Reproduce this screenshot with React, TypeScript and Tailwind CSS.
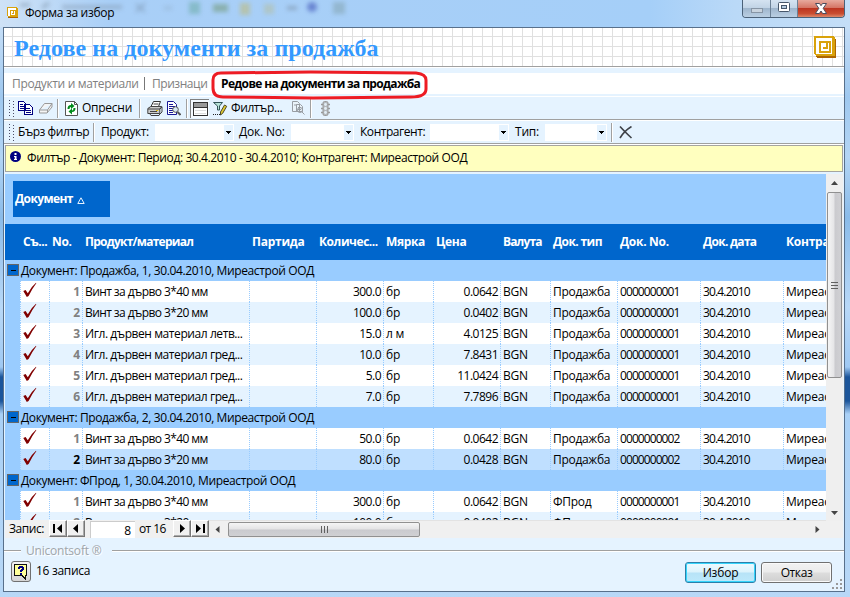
import React from "react";
import { clsx } from "clsx";

const COLS =
  "grid-cols-[29px_33px_167px_67px_67px_50px_67px_50px_67px_83px_83px_43px]";
const UI = "font-['Open_Sans','Noto_Sans',sans-serif]";

type Item = {
  no: number;
  name: string;
  qty: string;
  unit: string;
  price: string;
  kind: string;
  doc: string;
  selected?: boolean;
};

type Group = { title: string; items: Item[] };

const groups: Group[] = [
  {
    title: "Документ: Продажба, 1, 30.04.2010, Миреастрой ООД",
    items: [
      { no: 1, name: "Винт за дърво 3*40 мм", qty: "300.0", unit: "бр", price: "0.0642", kind: "Продажба", doc: "0000000001" },
      { no: 2, name: "Винт за дърво 3*20 мм", qty: "100.0", unit: "бр", price: "0.0402", kind: "Продажба", doc: "0000000001" },
      { no: 3, name: "Игл. дървен материал летв...", qty: "15.0", unit: "л м", price: "4.0125", kind: "Продажба", doc: "0000000001" },
      { no: 4, name: "Игл. дървен материал гред...", qty: "10.0", unit: "бр", price: "7.8431", kind: "Продажба", doc: "0000000001" },
      { no: 5, name: "Игл. дървен материал гред...", qty: "5.0", unit: "бр", price: "11.0424", kind: "Продажба", doc: "0000000001" },
      { no: 6, name: "Игл. дървен материал гред...", qty: "7.0", unit: "бр", price: "7.7896", kind: "Продажба", doc: "0000000001" },
    ],
  },
  {
    title: "Документ: Продажба, 2, 30.04.2010, Миреастрой ООД",
    items: [
      { no: 1, name: "Винт за дърво 3*40 мм", qty: "50.0", unit: "бр", price: "0.0642", kind: "Продажба", doc: "0000000002" },
      { no: 2, name: "Винт за дърво 3*20 мм", qty: "80.0", unit: "бр", price: "0.0428", kind: "Продажба", doc: "0000000002", selected: true },
    ],
  },
  {
    title: "Документ: ФПрод, 1, 30.04.2010, Миреастрой ООД",
    items: [
      { no: 1, name: "Винт за дърво 3*40 мм", qty: "300.0", unit: "бр", price: "0.0642", kind: "ФПрод", doc: "0000000001" },
      { no: 2, name: "Винт за дърво 3*20 мм", qty: "100.0", unit: "бр", price: "0.0402", kind: "ФПрод", doc: "0000000001" },
    ],
  },
];

const headers: [string, string][] = [
  ["Съ...", "tracking-[-0.45px]"],
  ["No.", "tracking-[-0.3px]"],
  ["Продукт/материал", "tracking-[-0.75px]"],
  ["Партида", "tracking-[-0.25px]"],
  ["Количес...", "tracking-[-0.45px]"],
  ["Мярка", "tracking-[-0.35px]"],
  ["Цена", "tracking-[-0.3px]"],
  ["Валута", "tracking-[-0.85px]"],
  ["Док. тип", "tracking-[-0.6px]"],
  ["Док. No.", "tracking-[-0.3px]"],
  ["Док. дата", "tracking-[-0.7px]"],
  ["Контра", "tracking-[-0.25px]"],
];

function BrandIcon({ size }: { size: number }) {
  return (
    <svg width={size} height={size} viewBox="0 0 22 22" shapeRendering="crispEdges">
      <path d="M3 2h17l2 1v19H3l-1-1z" fill="#ad6500" />
      <path d="M0 0h19l2 2v18H2l-2-2z" fill="#d9a20b" />
      <path d="M2 2h16v16H2z" fill="#fff" />
      <path d="M5 5h12v12H5z" fill="#d9a20b" />
      <path d="M7 7h8v8H7z" fill="#fff" />
      <path d="M7 11h5V7h2v6H9v2H7z" fill="#d9a20b" />
      <path d="M7 7h5v4H9v4H7z" fill="#fff" />
    </svg>
  );
}

function Check() {
  return (
    <svg className="mt-[1px]" width="14" height="16" viewBox="0 0 14 16">
      <path d="M0.3 9L2.600 8l2.200 3.300Q8 5 13 .8L13.300 1.300Q9 7 5.600 14L3.800 15z" fill="#800000" />
    </svg>
  );
}

function Sep({ className }: { className: string }) {
  return <div className={clsx("w-[2px] shrink-0 border-l border-[#a0a0a0] border-r border-r-white", className)} />;
}

function Grip() {
  return (
    <svg className="ml-[5px] mr-[2px] shrink-0" width="6" height="17" shapeRendering="crispEdges">
      {[0, 3, 6, 9, 12, 15].map((y) => (
        <g key={y} fill="#4b4b65">
          <rect x="0" y={y} width="1" height="1" />
          <rect x="4" y={y + 1} width="1" height="1" />
        </g>
      ))}
    </svg>
  );
}

function Combo({ className }: { className: string }) {
  return (
    <div className={clsx("flex h-[17px] shrink-0 border border-white bg-white", className)}>
      <div className="flex-1" />
      <div className="flex w-[9px] items-center justify-center bg-[#e5f3ff]">
        <svg width="5" height="3" shapeRendering="crispEdges"><path d="M0 0h5v1H4v1H3v1H2V2H1V1H0z" fill="#000" /></svg>
      </div>
    </div>
  );
}

function Row({ item, index }: { item: Item; index: number }) {
  const cell =
    "h-[21px] overflow-hidden whitespace-nowrap pl-[3px] bg-[linear-gradient(#99ccff_50%,transparent_50%)] bg-[length:1px_2px] bg-repeat-y";
  const bg = item.selected ? "bg-[#bfdfff]" : index % 2 ? "bg-[#e5f3ff]" : "bg-white";
  const num = "tracking-[-0.5px]";
  return (
    <div className={clsx("ml-[15px] grid h-[21px] shrink-0 leading-[21px]", COLS, bg)}>
      <div className={clsx(cell, "flex")}><Check /></div>
      <div className={clsx(cell, "pr-[2px] text-right font-bold", item.selected ? "text-black" : "text-[#808080]")}>{item.no}</div>
      <div className={clsx(cell, item.name.startsWith("Винт") ? "tracking-[-0.58px]" : "tracking-[-0.42px]")}>{item.name}</div>
      <div className={cell} />
      <div className={clsx(cell, "pr-[2px] text-right", num)}>{item.qty}</div>
      <div className={clsx(cell, "tracking-[-0.2px]")}>{item.unit}</div>
      <div className={clsx(cell, "pr-[2px] text-right", num)}>{item.price}</div>
      <div className={clsx(cell, "tracking-[-0.3px]")}>BGN</div>
      <div className={clsx(cell, "tracking-[-0.3px]")}>{item.kind}</div>
      <div className={clsx(cell, "tracking-[-0.92px]")}>{item.doc}</div>
      <div className={clsx(cell, "tracking-[-0.85px]")}>30.4.2010</div>
      <div className={clsx(cell, "tracking-[-0.2px]")}>Миреас</div>
    </div>
  );
}

function Title() {
  return (
    <header className="relative flex h-[27px] shrink-0 overflow-hidden bg-[linear-gradient(90deg,#cfe2f6_0,#a9cff7_110px,#a5cff8_650px,#bad9f7_735px,#c4def7_100%)]">
      <svg className="absolute left-0 top-0 blur-[2px]" width="400" height="20">
        <g opacity=".5">
          <path d="M20 5h10M42 8l7-5M62 7h60" stroke="#8298ad" strokeWidth="4" />
          <path d="M136 4l9 8M145 3l-9 9" stroke="#71869e" strokeWidth="2" />
          <path d="M164 8h8" stroke="#8fa9c2" strokeWidth="3" />
          <rect x="189" y="2" width="11" height="12" fill="#66a79e" />
          <rect x="213" y="4" width="15" height="8" fill="#6c9169" />
          <rect x="240" y="3" width="10" height="12" fill="#c2b86a" />
          <rect x="264" y="4" width="10" height="10" fill="#b5bd9b" />
          <path d="M287 8h10" stroke="#77889b" strokeWidth="4" />
          <circle cx="312" cy="7" r="5" fill="#2e40ad" />
          <rect x="333" y="2" width="12" height="12" fill="#80a0aa" />
        </g>
      </svg>
      <div className="relative flex w-full">
        <div className="ml-[7px] mt-[7px]"><BrandIcon size={11} /></div>
        <span className="ml-[7px] mt-[4px] text-[12px] leading-[18px] tracking-[-0.3px]">Форма за избор</span>
        <div className="ml-auto mr-[5px] flex h-[18px] w-[103px] overflow-hidden rounded-b-[4px] border border-t-0 border-[#4b6178]">
          <div className="flex w-[28px] items-center justify-center border-r border-[#6c8196] bg-[linear-gradient(#d5e3f1_0,#c2d4e6_45%,#9eb5cc_48%,#bacfe3_100%)]">
            <svg className="mt-[3px]" width="12" height="5"><rect x=".5" y=".5" width="11" height="4" fill="#c8d3de" stroke="#8795a5" /></svg>
          </div>
          <div className="flex w-[27px] items-center justify-center border-r border-[#6c8196] bg-[linear-gradient(#d5e3f1_0,#c2d4e6_45%,#9eb5cc_48%,#bacfe3_100%)]">
            <svg width="12" height="11" className="-mt-[2px]"><rect x=".5" y=".5" width="11" height="9" rx="1" fill="#fff" stroke="#46566a" /><rect x="3.5" y="3.5" width="5" height="3" fill="#b5cade" stroke="#46566a" /></svg>
          </div>
          <div className="flex flex-1 items-center justify-center bg-[linear-gradient(#e7aa9d_0,#d57665_45%,#bc3520_49%,#c94d31_80%,#df896a_100%)]">
            <svg className="-mt-px" width="12" height="11" viewBox="0 0 12 11"><path d="M.5.5h4L6 2.7 7.500.5h4L8.200 5.300l3.400 5.200h-4L6 8l-1.600 2.500h-4L3.800 5.300z" fill="#fff" stroke="#4b4c5d" /></svg>
          </div>
        </div>
      </div>
    </header>
  );
}

function Toolbar() {
  return (
    <div className="flex h-[22px] shrink-0 items-center bg-[#e5f3ff] [&>svg]:shrink-0">
      <Grip />
      <svg className="ml-px" width="15" height="14" viewBox="0 0 15 14" shapeRendering="crispEdges">
        <path d="M.5.5h5l2 2v7h-7zM6.500 3.500h5l3 3v7h-8z" fill="#fff" stroke="#000080" />
        <path d="M2 3.500h3M2 5.500h4M2 7.500h4M8 7.500h4M8 9.500h5M8 11.500h5" stroke="#000080" fill="none" />
      </svg>
      <svg className="ml-[6px]" width="14" height="12" viewBox="0 0 14 12">
        <path d="M.5 8l5-6.500h7.500L8.500 8zM.5 8v3h7.500l5-6V1.500M8.500 8v3" fill="#f4f4f4" stroke="#999" />
      </svg>
      <Sep className="ml-[4px] h-[19px]" />
      <svg className="ml-[6px]" width="14" height="15" viewBox="0 0 14 15">
        <path d="M.5.5h9l3 3v11H.500z" fill="#fff" stroke="#555" />
        <path d="M9.500.5v3h3" fill="none" stroke="#555" />
        <path d="M2.500 8Q2.500 4 6 4V2L9.500 5 6 8V6Q4.500 6 4.500 8zM10.500 7Q10.500 11 7 11v2.500L3.500 10.500l3.500-3V9.500q1.500 0 1.500-2.500z" fill="#008b1b" />
      </svg>
      <span className="ml-[3px] w-[52px] shrink-0 text-[12px] tracking-[-0.25px]">Опресни</span>
      <Sep className="ml-[5px] h-[19px]" />
      <svg className="ml-[6px]" width="16" height="15" viewBox="0 0 16 15">
        <path d="M4 5.500L6.500.5h7L11.500 5.500z" fill="#fff" stroke="#333" />
        <path d="M.8 7.500l3-2h11l-2 2.500v4.500h-12z" fill="#ccc" stroke="#444" />
        <path d="M1 8h12l2-2v5l-2 2M3 13l1 1.500h8l1-2M6.500 3h5M3 10.500h7" fill="none" stroke="#444" />
        <path d="M9 9.500h2" stroke="#e0bd00" />
      </svg>
      <svg className="ml-[4px]" width="14" height="15" viewBox="0 0 14 15">
        <path d="M.5.5h6l3 3v10h-9z" fill="#fff" stroke="#181896" />
        <path d="M2 3.500h4M2 5.500h6M2 7.500h4M2 9.500h4M2 11.500h4" stroke="#181896" />
        <circle cx="8.500" cy="8.500" r="2.800" fill="#d7e7f4" stroke="#555" />
        <path d="M10.500 11l3 3" stroke="#555" strokeWidth="2" />
      </svg>
      <Sep className="ml-[5px] h-[19px]" />
      <div className="ml-[2px] flex h-[19px] w-[19px] shrink-0 items-center justify-center border-l border-t border-[#808080] bg-[#f5faff]">
        <svg width="15" height="14" shapeRendering="crispEdges">
          <path d="M.5.500h14v13H.500z" fill="#fff" stroke="#333" />
          <path d="M1 1h13v4H1z" fill="#999" />
          <path d="M1 5.500h13" stroke="#333" />
          <path d="M2 8.500h11M2 11.500h11" stroke="#ddd" />
        </svg>
      </div>
      <svg className="ml-[4px]" width="15" height="15" viewBox="0 0 15 15">
        <path d="M.5 1.500h9L6.500 5v4h-2V5z" fill="#b7e4d9" stroke="#325457" />
        <path d="M7.500 11l4-7 2.200 1.300-4 7L7.500 14z" fill="#e0c92f" stroke="#4b482b" />
        <path d="M0 13.500h7" stroke="#222" strokeDasharray="1 1" />
      </svg>
      <span className="ml-[3px] w-[56px] shrink-0 text-[12px] tracking-[-0.4px]">Филтър...</span>
      <svg className="ml-[5px]" width="13" height="14" viewBox="0 0 13 14">
        <path d="M.5.500h5l2 2v8h-7zM4.500 3.500h4l2 2v5h-6z" fill="#eaf3fa" stroke="#989da3" />
        <path d="M2 4h3M6 6.500h3M6 8.500h3M9 10l3.500 3.500" stroke="#989da3" />
        <circle cx="8" cy="9" r="2.500" fill="none" stroke="#989da3" />
      </svg>
      <Sep className="ml-[5px] h-[19px]" />
      <svg className="ml-[9px]" width="9" height="15" viewBox="0 0 9 15">
        <rect x="2" y=".5" width="5" height="14" rx="1.500" fill="#b4b8bc" stroke="#999" />
        <path d="M0 3.500h2M7 3.500h2M0 7.500h2M7 7.500h2M0 11.500h2M7 11.500h2" stroke="#999" strokeWidth="1.500" />
        <circle cx="4.500" cy="3.500" r="1.400" fill="#e2edf5" /><circle cx="4.500" cy="7.500" r="1.400" fill="#e2edf5" /><circle cx="4.500" cy="11.500" r="1.400" fill="#e2edf5" />
      </svg>
    </div>
  );
}

function QuickFilter() {
  return (
    <div className="flex h-[22px] shrink-0 items-center bg-[#e5f3ff] text-[12px] whitespace-nowrap [&>span]:shrink-0">
      <Grip />
      <span className="ml-[1px] w-[74px] tracking-[-0.45px]">Бърз филтър</span>
      <Sep className="ml-px h-[19px]" />
      <span className="ml-[6px] w-[54px] tracking-[-0.45px]">Продукт:</span>
      <Combo className="w-[79px]" />
      <span className="ml-[5px] w-[50px] tracking-[-0.2px]">Док. No:</span>
      <Combo className="ml-[2px] w-[63px]" />
      <span className="ml-[6px] w-[68px] tracking-[-0.45px]">Контрагент:</span>
      <Combo className="ml-[2px] w-[79px]" />
      <span className="ml-[6px] w-[28px] tracking-[-0.2px]">Тип:</span>
      <Combo className="ml-[2px] w-[62px]" />
      <Sep className="ml-[4px] h-[19px]" />
      <svg className="ml-[6px]" width="14" height="13" viewBox="0 0 14 13">
        <path d="M1 0.500Q5 5 12.500 12M12.500 .500Q5 5 1 12" fill="none" stroke="#3f4248" strokeWidth="1.600" />
      </svg>
    </div>
  );
}

function NavButton({ d }: { d: string }) {
  return (
    <div className="flex h-[17px] w-[18px] shrink-0 items-center justify-center border border-white border-b-[#777] border-r-[#777] bg-[#f0f0f0] shadow-[inset_-1px_-1px_#aaa]">
      <svg width="12" height="9" viewBox="0 0 12 9"><path d={d} fill="#000" /></svg>
    </div>
  );
}

function Navigator() {
  return (
    <div className="flex h-[18px] shrink-0 bg-[#f0f0f0] text-[12px] leading-[18px]">
      <span className="ml-[4px] w-[40px] shrink-0 tracking-[-0.45px]">Запис:</span>
      <NavButton d="M1 0h2v9H1zM10 0v9L5 4.500z" />
      <NavButton d="M8 0v9L3 4.500z" />
      <div className="ml-[5px] mt-px w-[45px] shrink-0 border-l border-t border-[#ccc] bg-white pr-[4px] text-right leading-[17px]">8</div>
      <span className="ml-[4px] w-[34px] shrink-0 tracking-[-0.6px] whitespace-nowrap">от 16</span>
      <NavButton d="M4 0v9l5-4.500z" />
      <NavButton d="M2 0v9l5-4.500zM9 0h2v9H9z" />
      <div className="flex flex-1 items-center border-t border-[#e3e3e3]">
        <svg className="ml-[6px]" width="5" height="7"><path d="M4.500 0v7L.500 3.500z" fill="#444" /></svg>
        <div className="ml-[8px] flex h-[15px] w-[192px] items-center justify-center gap-[2px] rounded-[2px] border border-[#909090] bg-[linear-gradient(#f5f5f5_0,#e3e3e5_48%,#cacace_52%,#d0d0d3_100%)]">
          {[0, 1, 2].map((i) => <i key={i} className="h-[7px] w-px bg-[#606060]" />)}
        </div>
        <svg className="ml-auto mr-[6px]" width="5" height="7"><path d="M.5 0v7l4-3.500z" fill="#444" /></svg>
      </div>
    </div>
  );
}

function DataGrid() {
  return (
    <div className="ml-px mt-[2px] flex h-[364px] w-[838px] shrink-0 bg-[#f0f0f0]">
      <div className="flex w-[821px] flex-col overflow-hidden">
        <div className="flex h-[346px] flex-col overflow-hidden bg-[#99ccff]">
          <div className="h-[50px] shrink-0 pl-[8px] pt-[7px]">
            <div className="flex h-[36px] w-[97px] items-center bg-[#06c] pl-[2px] text-[12px] font-bold tracking-[-0.6px] text-white">
              Документ
              <svg className="ml-[4px] mt-[3px]" width="8" height="7"><path d="M.8 6.500h6.400L4 .800z" fill="none" stroke="#e7f2ff" /></svg>
            </div>
          </div>
          <div className="h-[36px] shrink-0 bg-[#06c] pl-[15px]">
            <div className={clsx("grid text-[12px] font-bold leading-[35px] whitespace-nowrap text-white", COLS)}>
              {headers.map(([h, spacing]) => <span key={h} className={clsx("pl-[3px]", spacing)}>{h}</span>)}
            </div>
          </div>
          {groups.map((g) => (
            <React.Fragment key={g.title}>
              <div className="flex h-[21px] shrink-0 items-start text-[12px] leading-[21px]">
                <div className="ml-[2px] mt-[4px] flex h-[12px] w-[12px] items-center justify-center border border-[#666] bg-[#06c]"><i className="h-px w-[5px] bg-black" /></div>
                <span className="ml-[2px] whitespace-nowrap tracking-[-0.38px]">{g.title}</span>
              </div>
              {g.items.map((it, i) => <Row key={it.no} item={it} index={i} />)}
            </React.Fragment>
          ))}
        </div>
        <Navigator />
      </div>
      <div className="flex h-[347px] w-[17px] flex-col items-center bg-[#efefef]">
        <svg className="mt-[7px]" width="7" height="4"><path d="M0 4L3.500 0 7 4z" fill="#444" /></svg>
        <div className="mt-[7px] flex h-[186px] w-[15px] flex-col items-center justify-center gap-[2px] rounded-[2px] border border-[#909090] bg-[linear-gradient(90deg,#f5f5f5_0,#e4e4e6_48%,#cacace_52%,#d0d0d3_100%)]">
          {[0, 1, 2].map((i) => <i key={i} className="h-px w-[7px] bg-[#606060]" />)}
        </div>
        <svg className="mb-[6px] mt-auto" width="7" height="4"><path d="M0 0l3.500 4L7 0z" fill="#444" /></svg>
      </div>
    </div>
  );
}

function Footer() {
  return (
    <footer className="flex h-[53px] shrink-0 flex-col bg-[#e5f3ff]">
      <div className="flex h-[25px] items-center text-[12px] text-[#a0a5aa]">
        <i className="h-[2px] w-[17px] border-t border-[#a0a0a0] bg-white" />
        <span className="ml-[5px] w-[86px] tracking-[-0.2px] whitespace-nowrap [text-shadow:1px_1px_white]">Unicontsoft ®</span>
        <i className="h-[2px] flex-1 border-t border-[#a0a0a0] bg-white" />
      </div>
      <div className="-mt-px flex">
        <div className="ml-[7px] -mt-px flex h-[21px] w-[20px] items-center justify-center rounded-[3px] border border-[#707070] bg-[linear-gradient(#f5f5f5,#d5d5d5)]">
          <svg width="14" height="16" viewBox="0 0 14 16" shapeRendering="crispEdges"><path d="M.500.500h12v11H11v3l-3-3H.500z" fill="#ffff99" stroke="#111" /><path d="M4 4V3h1V2h4v1h1v3H9v1H8v1H6V6h1V5h1V4H6v1H4zM6 9h2v2H6z" fill="#000080" /></svg>
        </div>
        <span className="ml-[5px] text-[12px] leading-[17px] tracking-[-0.3px]">16 записа</span>
        <div className="ml-auto flex gap-[5px] text-[12px]">
          <button className="flex h-[21px] w-[71px] items-center justify-center rounded-[3px] border border-[#2b7fa9] bg-[linear-gradient(#eefaff_0,#dcf3fc_48%,#b7e3f7_52%,#bde9fb_100%)] tracking-[-0.2px] shadow-[inset_0_0_0_1px_#35d5fc]">Избор</button>
          <button className="mr-[12px] flex h-[21px] w-[71px] items-center justify-center rounded-[3px] border border-[#707070] bg-[linear-gradient(#f2f2f2_0,#ebebeb_48%,#ddd_52%,#cfcfcf_100%)] tracking-[-0.4px] shadow-[inset_0_0_0_1px_#fafafa]">Отказ</button>
        </div>
      </div>
    </footer>
  );
}

export default function App() {
  return (
    <div className={clsx("relative h-[597px] w-[850px] overflow-hidden bg-[#bad9f7] text-[12px] text-black", UI)}>
      <Title />
      <div className="flex h-full bg-[linear-gradient(#c5def7_0,#9fc8ef_70px,#b3d5f5_130px,#8abbe9_190px,#b8d8f7_280px,#9fc9f3_340px,#1b559b_350px,#1b559b_374px,#a9d0f6_387px,#bad9f7_100%)]">
        <main className="ml-[3px] flex h-[565px] w-[842px] flex-col overflow-hidden border border-[#58708b] bg-[#e5f3ff]">
          <div className="flex h-[39px] shrink-0 justify-between border-b border-[#a0a0a0] bg-[#fff] bg-[linear-gradient(90deg,transparent_8px,#e0e0e0_8px,#e0e0e0_9px,transparent_9px),linear-gradient(transparent_8px,#e0e0e0_8px,#e0e0e0_9px,transparent_9px)] bg-[length:10px_10px]">
            <h1 className="ml-[10px] mt-[6px] font-['Liberation_Serif',serif] text-[24px] font-bold leading-[28px] tracking-[0.06px] text-[#3399ff]">Редове на документи за продажба</h1>
            <div className="mr-[8px] mt-[8px]"><BrandIcon size={22} /></div>
          </div>
          <div className="h-[6px] shrink-0 border-t border-white bg-[#e5f3ff]" />
          <nav className="flex h-[21px] shrink-0 items-center bg-white text-[12px] text-[#808080]">
            <span className="ml-[8px] w-[128px] tracking-[-0.35px] whitespace-nowrap">Продукти и материали</span>
            <i className="ml-[4px] h-[13px] w-px bg-[#777]" />
            <span className="ml-[7px] w-[55px] tracking-[-0.45px]">Признаци</span>
            <b className="ml-[14px] tracking-[-0.66px] whitespace-nowrap text-black">Редове на документи за продажба</b>
          </nav>
          <div className="h-[3px] shrink-0 border-b border-white bg-[#e5f3ff]" />
          <Toolbar />
          <div className="h-[2px] shrink-0 border-b border-white bg-[#a0a0a0]" />
          <QuickFilter />
          <div className="h-[2px] shrink-0 border-b border-white bg-[#a0a0a0]" />
          <div className="ml-px flex h-[27px] w-[838px] shrink-0 items-center border border-[#a5a5a0] bg-[#ffffbf] text-[12px]">
            <svg className="-mt-[4px] ml-[4px]" width="11" height="11"><circle cx="5.500" cy="5.500" r="5.500" fill="#000080" /><path d="M4.500 2h2v2h-2zM4 5h2.500v3H7v1H4V8h.700V6H4z" fill="#fff" /></svg>
            <span className="-mt-px ml-[6px] whitespace-nowrap tracking-[-0.39px]">Филтър - Документ: Период: 30.4.2010 - 30.4.2010; Контрагент: Миреастрой ООД</span>
          </div>
          <DataGrid />
          <Footer />
        </main>
      </div>
      <svg className="absolute left-[211px] top-[70px]" width="218" height="30">
        <path d="M10 3Q2 3 2 10v8q0 9 10 9l90 1 98-1q15 0 15-8v-9q0-6-10-7L100 2z" fill="none" stroke="#ed1c24" strokeWidth="3" />
      </svg>
      <svg className="absolute left-[832px] top-[579px]" width="11" height="11" shapeRendering="crispEdges"><path d="M8 0h2v2H8zM4 4h2v2H4zM8 4h2v2H8zM0 8h2v2H0zM4 8h2v2H4zM8 8h2v2H8z" fill="#999" /></svg>
    </div>
  );
}
